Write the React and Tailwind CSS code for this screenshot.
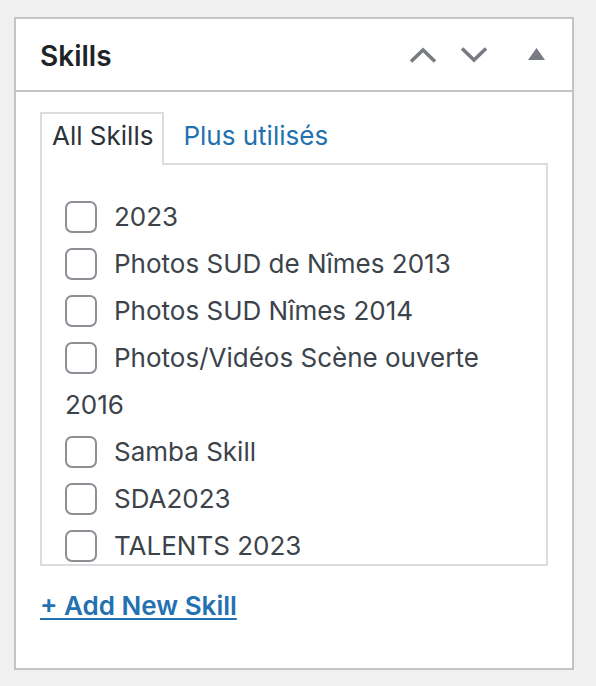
import React from "react";

const items = [
  "2023",
  "Photos SUD de Nîmes 2013",
  "Photos SUD Nîmes 2014",
  "Photos/Vidéos Scène ouverte 2016",
  "Samba Skill",
  "SDA2023",
  "TALENTS 2023",
];

function Box() {
  return (
    <span className="inline-block align-middle w-[32px] h-[32px] -mt-[4px] mr-[17px] rounded-[7px] border-2 border-[#8c8f94] bg-white"></span>
  );
}

export default function App() {
  return (
    <div
      className="min-h-[686px] w-[596px] bg-[#f0f0f1] pt-[17px] pl-[14px]"
      style={{ fontFamily: "Inter, 'Noto Sans', sans-serif" }}
    >
      <div className="w-[560px] h-[653px] border-2 border-[#c3c4c7] bg-white flex flex-col">
        <div className="h-[73px] border-b-2 border-[#c3c4c7] flex items-center pl-[24px] pr-[27px] shrink-0">
          <h2 className="flex-1 pt-[2px] text-[28px] font-semibold text-[#1d2327] leading-none">Skills</h2>
          <svg width="28" height="16" viewBox="0 0 28 16" className="mt-[1px]">
            <path d="M2 14.5 L14 3 L26 14.5" fill="none" stroke="#787c82" strokeWidth="3.6" />
          </svg>
          <svg width="28" height="16" viewBox="0 0 28 16" className="ml-[23px] mt-[1px]">
            <path d="M2 1.5 L14 13 L26 1.5" fill="none" stroke="#787c82" strokeWidth="3.6" />
          </svg>
          <svg width="17" height="12" viewBox="0 0 17 12" className="ml-[40px] -mt-[2px]">
            <path d="M8.5 0 L17 12 L0 12 Z" fill="#787c82" />
          </svg>
        </div>
        <div className="px-[24px] pt-[20px]">
          <div className="flex text-[26px] leading-[34px]">
            <div className="relative z-10 -mb-[2px] border-2 border-b-0 border-[#dcdcde] bg-white pl-[10px] pr-[9px] pt-[5px] pb-[12px] text-[#2c3338]">
              All Skills
            </div>
            <div className="pl-[19px] pt-[7px] text-[#2271b1]">Plus utilisés</div>
          </div>
          <div className="h-[403px] border-2 border-[#dcdcde] overflow-hidden pl-[23px] pr-[20px] pt-[28px]">
            <ul className="text-[26px] leading-[47px] text-[#3c434a]">
              {items.map((t) => (
                <li key={t}>
                  <Box />
                  {t}
                </li>
              ))}
            </ul>
          </div>
          <a
            href="#"
            className="inline-block mt-[23px] text-[26px] leading-[34px] font-semibold text-[#2271b1] underline decoration-2 underline-offset-[3px]"
          >
            + Add New Skill
          </a>
        </div>
      </div>
    </div>
  );
}
